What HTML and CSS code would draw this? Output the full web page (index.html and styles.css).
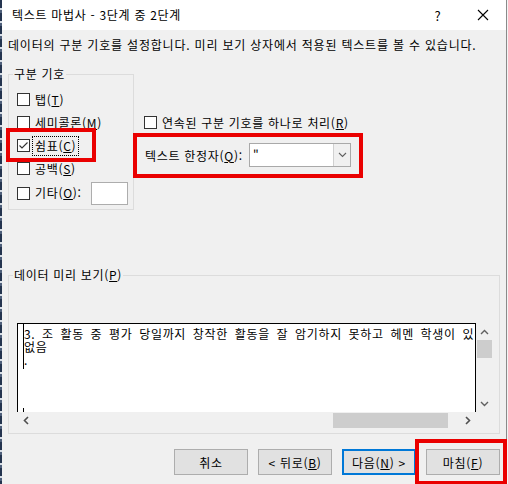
FILE: index.html
```html
<!DOCTYPE html>
<html lang="ko">
<head>
<meta charset="utf-8">
<title>텍스트 마법사</title>
<link rel="stylesheet" href="styles.css">
</head>
<body>
<div class="screen">
  <div class="sliver"></div>
  <div class="dialog">
    <div class="titlebar">
      <span class="title">텍스트 마법사 - 3단계 중 2단계</span>
      <span class="tb-btn help">?</span>
      <span class="tb-btn close"><svg width="12" height="12" viewBox="0 0 12 12"><path d="M1 1L11 11M11 1L1 11" stroke="#000" stroke-width="1.1" fill="none"/></svg></span>
    </div>
    <p class="desc">데이터의 구분 기호를 설정합니다. 미리 보기 상자에서 적용된 텍스트를 볼 수 있습니다.</p>
    <div class="top">
      <fieldset class="group delim">
        <legend>구분 기호</legend>
        <div class="rows">
          <div class="chk"><span class="box"></span><span>탭(<u>T</u>)</span></div>
          <div class="chk"><span class="box"></span><span>세미콜론(<u>M</u>)</span></div>
          <div class="chk"><span class="box"><svg width="11" height="11" viewBox="0 0 11 11"><path d="M1.5 5.5L4 8L9.5 2.5" stroke="#333" stroke-width="1.1" fill="none"/></svg></span><span class="focus">쉼표(<u>C</u>)</span></div>
          <div class="chk"><span class="box"></span><span>공백(<u>S</u>)</span></div>
          <div class="chk other"><span class="box"></span><span>기타(<u>O</u>):</span><span class="tbox"></span></div>
        </div>
      </fieldset>
      <div class="side">
        <div class="chk"><span class="box"></span><span>연속된 구분 기호를 하나로 처리(<u>R</u>)</span></div>
        <div class="qual">
          <span class="qlabel">텍스트 한정자(<u>Q</u>):</span>
          <div class="combo">
            <span class="cval">"</span>
            <span class="cbtn"><svg width="9" height="6" viewBox="0 0 9 6"><path d="M1 1L4.5 4.5L8 1" stroke="#606060" stroke-width="1.1" fill="none"/></svg></span>
          </div>
        </div>
      </div>
    </div>
    <fieldset class="group preview">
      <legend>데이터 미리 보기(<u>P</u>)</legend>
      <div class="inner">
        <div class="grid">
          <div class="data">
            <div class="cols">
              <div class="line">3. 조 활동 중 평가 당일까지 창작한 활동을 잘 암기하지 못하고 헤멘 학생이 있</div>
              <div class="line">없음</div>
              <div class="line">.</div>
            </div>
            <div class="tick"></div>
          </div>
          <div class="vs">
            <span class="arr"><svg width="9" height="6" viewBox="0 0 9 6"><path d="M1 5L4.5 1.5L8 5" stroke="#606060" stroke-width="1.4" fill="none"/></svg></span>
            <span class="vthumb"></span>
            <span class="spacer"></span>
            <span class="arr"><svg width="9" height="6" viewBox="0 0 9 6"><path d="M1 1L4.5 4.5L8 1" stroke="#606060" stroke-width="1.4" fill="none"/></svg></span>
          </div>
          <div class="hs">
            <span class="arr"><svg width="6" height="9" viewBox="0 0 6 9"><path d="M5 1L1.5 4.5L5 8" stroke="#505050" stroke-width="1.6" fill="none"/></svg></span>
            <span class="hthumb"></span>
            <span class="spacer"></span>
            <span class="arr"><svg width="6" height="9" viewBox="0 0 6 9"><path d="M1 1L4.5 4.5L1 8" stroke="#505050" stroke-width="1.6" fill="none"/></svg></span>
          </div>
          <div class="corner"></div>
        </div>
      </div>
    </fieldset>
    <div class="buttons">
      <span class="btn">취소</span>
      <span class="btn">&lt; 뒤로(<u>B</u>)</span>
      <span class="btn default">다음(<u>N</u>) &gt;</span>
      <span class="btn">마침(<u>F</u>)</span>
    </div>
  </div>
  <div class="mark m1"></div>
  <div class="mark m2"></div>
  <div class="mark m3"></div>
</div>
</body>
</html>
```

FILE: styles.css
```css
* { box-sizing: border-box; }
html, body { margin: 0; padding: 0; }
body {
  width: 508px;
  height: 484px;
  overflow: hidden;
  background: #f4f4f4;
  font-family: "Noto Sans CJK KR", "Noto Sans", sans-serif;
  font-size: 12px;
  letter-spacing: 0.7px;
  color: #000;
}
u { text-decoration: underline; text-underline-offset: 1px; text-decoration-thickness: 1px; }
.screen { position: relative; display: flex; width: 508px; height: 484px; }
.sliver {
  width: 2px;
  flex: none;
  background: repeating-linear-gradient(to bottom, #24344f 0 8px, #d6dde6 8px 10px, #4e5f7a 10px 13px);
}
.dialog {
  width: 505px;
  flex: none;
  border-right: 1px solid #8a8a8a;
  background: #f0f0f0;
  display: flex;
  flex-direction: column;
}
.titlebar { height: 30px; background: #fff; display: flex; align-items: center; flex: none; }
.title { flex: 1; padding-left: 10px; line-height: 16px; }
.tb-btn { width: 46px; height: 30px; display: flex; align-items: center; justify-content: center; }
.help { font-size: 13px; padding-left: 2px; }
.desc { margin: 7px 0 0 6px; line-height: 16px; white-space: nowrap; letter-spacing: 0.8px; }
.top { display: flex; align-items: flex-start; margin-top: 13px; padding-left: 6px; }
.group { margin: 0; padding: 0; border: 1px solid #dcdcdc; min-width: 0; }
.group legend { margin-left: 4px; padding: 0 1px; line-height: 16px; }
.delim { width: 126px; flex: none; }
.rows { padding: 6px 5px 4px 8px; display: flex; flex-direction: column; }
.chk { display: flex; align-items: center; height: 23px; gap: 5px; white-space: nowrap; line-height: 16px; }
.chk.other { height: 24px; margin-top: 1px; }
.box {
  width: 13px; height: 13px; flex: none;
  border: 1px solid #333; background: #fff;
  display: flex; align-items: center; justify-content: center;
}
.focus { outline: 1px dotted #000; outline-offset: 1px; padding: 0 1px; margin-left: -1px; }
.tbox { margin-left: auto; width: 37px; height: 23px; border: 1px solid #adadad; background: #fff; }
.side { padding: 45px 0 0 10px; }
.qual { display: flex; align-items: center; margin-top: 9px; height: 24px; }
.qlabel { width: 105px; padding-left: 1px; white-space: nowrap; }
.combo { width: 102px; height: 24px; border: 1px solid #a9a9a9; background: #fff; display: flex; }
.cval { flex: 1; padding-left: 3px; line-height: 22px; }
.cbtn { width: 17px; border-left: 1px solid #d0d0d0; background: #f0f0f0; display: flex; align-items: center; justify-content: center; }
.preview { width: 492px; margin: 57px 0 0 6px; flex: none; }
.inner { padding: 40px 6px 4px 8px; }
.grid { display: grid; grid-template-columns: 459px 17px; grid-template-rows: 89px 17px; }
.data {
  background: #fff;
  border: 1px solid #000;
  border-bottom: none;
  display: flex;
  flex-direction: column;
  overflow: hidden;
}
.cols {
  margin-left: 5px;
  border-left: 1px solid #000;
  height: 45px;
  padding-top: 3px;
  line-height: 13px;
  white-space: nowrap;
  letter-spacing: 0.7px;
  word-spacing: 2.6px;
}
.tick { margin-top: auto; margin-left: 5px; border-left: 1px solid #000; height: 4px; flex: none; }
.vs { background: #f0f0f0; display: flex; flex-direction: column; align-items: center; }
.vs .arr { height: 17px; width: 17px; display: flex; align-items: center; justify-content: center; flex: none; }
.vthumb { width: 15px; height: 18px; background: #cdcdcd; flex: none; }
.spacer { flex: 1; }
.hs { background: #f0f0f0; display: flex; align-items: center; }
.hs .arr { width: 17px; height: 17px; display: flex; align-items: center; justify-content: center; flex: none; }
.hthumb { width: 115px; height: 15px; margin-left: 299px; background: #cdcdcd; flex: none; }
.corner { background: #f0f0f0; }
.buttons { display: flex; justify-content: flex-end; gap: 10px; margin-top: 15px; padding-right: 6px; }
.btn {
  width: 74px; height: 26px;
  background: #e1e1e1;
  border: 1px solid #adadad;
  display: flex; align-items: center; justify-content: center;
  white-space: nowrap;
}
.btn.default { border: 2px solid #0078d7; }
.mark { position: absolute; border: 4px solid #ea0000; }
.m1 { left: 6px; top: 128px; width: 90px; height: 34px; }
.m2 { left: 133px; top: 133px; width: 230px; height: 45px; }
.m3 { left: 415px; top: 439px; width: 92px; height: 46px; }
```
